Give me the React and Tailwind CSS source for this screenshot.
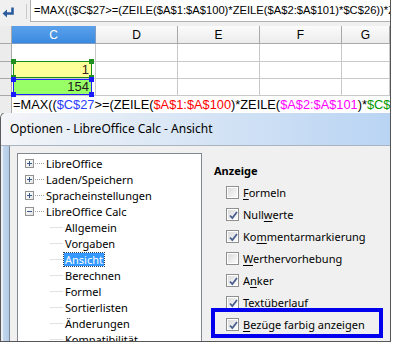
import React from "react";

const SANS = "font-['Liberation_Sans',Arial,sans-serif]";
const UI = "font-['Noto_Sans',sans-serif]";

function EnterIcon() {
  return (
    <svg width="13" height="11" viewBox="0 0 13 11">
      <path d="M10.5 0.5 V6.5 H4" fill="none" stroke="#2b5d9e" strokeWidth="2.6" />
      <path d="M0.5 6.5 L5 2.5 V10.5 Z" fill="#2b5d9e" />
    </svg>
  );
}

function Handle({ cls, color }) {
  return <div className={`absolute w-[5px] h-[5px] ${color} ${cls}`} />;
}

function Check({ checked }) {
  return (
    <div className="w-[13px] h-[13px] border border-[#8e8f8f] bg-white p-px shrink-0">
      <div className="w-full h-full bg-gradient-to-br from-[#dcdcdc] to-[#fafafa] relative">
        {checked && (
          <svg className="absolute left-0 top-0" width="11" height="11" viewBox="0 0 11 11">
            <path d="M2 5.5 L4.3 8 L9 2" fill="none" stroke="#4a5f8f" strokeWidth="1.8" />
          </svg>
        )}
      </div>
    </div>
  );
}

function Opt({ checked, children }) {
  return (
    <div className="h-[22px] flex items-center gap-[4px]">
      <Check checked={checked} />
      <span className="leading-none">{children}</span>
    </div>
  );
}

function U({ children }) {
  return <span className="underline underline-offset-2">{children}</span>;
}

function TreeTop({ label, open }) {
  return (
    <div className="h-[16px] flex items-center">
      <div className="w-[7px]" />
      <div className="w-[9px] h-[9px] border border-[#919191] bg-gradient-to-br from-white to-[#e4e4e4] relative shrink-0">
        <div className="absolute left-[1px] right-[1px] top-[3px] h-px bg-[#3b5a8a]" />
        {!open && <div className="absolute top-[1px] bottom-[1px] left-[3px] w-px bg-[#3b5a8a]" />}
      </div>
      <div className="w-[9px] h-px border-t border-dotted border-[#a0a0a0] ml-px mr-[2px]" />
      <span className="leading-none">{label}</span>
    </div>
  );
}

function TreeChild({ label, sel }) {
  return (
    <div className="h-[16px] flex items-center">
      <div className="w-[32px]" />
      <div className="w-[13px] h-px bg-[#e2e2e2]" />
      <div className="w-[1px]" />
      <span
        className={
          sel
            ? "leading-none bg-[#3399ff] text-white px-px py-[1px] outline outline-1 outline-dotted outline-[#1d3b66]"
            : "leading-none px-px"
        }
      >
        {label}
      </span>
    </div>
  );
}

export default function App() {
  const cols = [
    { l: "C", w: "w-[84px]", sel: true },
    { l: "D", w: "w-[82px]" },
    { l: "E", w: "w-[82px]" },
    { l: "F", w: "w-[82px]" },
    { l: "G", w: "flex-1" },
  ];
  return (
    <div className="w-[393px] h-[345px] bg-white overflow-hidden relative">
      <div className="w-[391px] h-[342px] border-r border-b border-[#555] overflow-hidden relative">
        {/* Spreadsheet */}
        <div className={`h-[112px] ${SANS}`}>
          {/* formula bar */}
          <div className="h-[26px] bg-[#f0f0f0] flex">
            <div className="w-[26px] pl-[2px] pt-[7px]">
              <EnterIcon />
            </div>
            <div className="w-px h-[15px] mt-[4px] bg-[#c9c9c9]" />
            <div className="ml-[3px] flex-1 h-[22px] bg-white border border-t-0 border-r-0 border-[#b0b0b0] flex items-center pl-[3px] text-[11.2px] text-black whitespace-nowrap overflow-hidden">
              =MAX(($C$27&gt;=(ZEILE($A$1:$A$100)*ZEILE($A$2:$A$101)*$C$26))*Z
            </div>
          </div>
          {/* header row */}
          <div className="h-[18px] flex text-[12px]">
            <div className="w-[12px] bg-[#ececec] border-r border-b border-[#a9a9a9]" />
            {cols.map((c) => (
              <div
                key={c.l}
                className={`${c.w} h-full flex items-center justify-center border-r border-b ${
                  c.sel
                    ? "bg-gradient-to-b from-[#5aa1ea] to-[#3b8ae0] text-white border-[#7a9cc4]"
                    : "bg-gradient-to-b from-[#fbfbfb] to-[#ececec] text-black border-[#a9a9a9]"
                }`}
              >
                {c.l}
              </div>
            ))}
          </div>
          {/* rows */}
          {[18, 17, 17].map((h, i) => (
            <div key={i} className="flex" style={{ height: h }}>
              <div className="w-[12px] bg-[#ececec] border-r border-b border-[#a9a9a9]" />
              {cols.map((c) => (
                <div key={c.l} className={`${c.w} h-full border-r border-b border-[#c9c9c9] relative`}>
                  {c.l === "C" && i === 1 && (
                    <div className="absolute left-[1px] top-[-1px] w-[79px] h-[17px] bg-[#ffff99] border border-[#1a8a1a] flex items-center justify-end pr-[2px] text-[13px] text-[#3a2020]">
                      1
                      <Handle cls="left-[-3px] top-[-3px]" color="bg-[#1f8f1f]" />
                      <Handle cls="right-[-3px] top-[-3px]" color="bg-[#1f8f1f]" />
                      <Handle cls="left-[-3px] bottom-[-3px]" color="bg-[#1f8f1f]" />
                      <Handle cls="right-[-3px] bottom-[-3px]" color="bg-[#1f8f1f]" />
                    </div>
                  )}
                  {c.l === "C" && i === 2 && (
                    <div className="absolute left-[1px] top-0 w-[79px] h-[16px] bg-[#99ff66] border border-[#2020ff] flex items-center justify-end pr-[2px] text-[13px] text-[#202020]">
                      154
                      <Handle cls="left-[-3px] top-[-3px]" color="bg-[#1a1aff]" />
                      <Handle cls="right-[-3px] top-[-3px]" color="bg-[#1a1aff]" />
                      <Handle cls="left-[-3px] bottom-[-3px]" color="bg-[#1a1aff]" />
                      <Handle cls="right-[-3px] bottom-[-3px]" color="bg-[#1a1aff]" />
                    </div>
                  )}
                </div>
              ))}
            </div>
          ))}
          {/* in-cell formula line */}
          <div className="h-[17px] flex">
            <div className="w-[12px] bg-[#ececec] border-r border-[#a9a9a9]" />
            <div className="flex-1 bg-white flex items-center pl-px text-[12.8px] whitespace-nowrap overflow-hidden">
              <span className="text-black">=MAX((</span>
              <span className="text-[#2a3cff]">$C$27</span>
              <span className="text-black">&gt;=(ZEILE(</span>
              <span className="text-[#ff0000]">$A$1:$A$100</span>
              <span className="text-black">)*ZEILE(</span>
              <span className="text-[#ff00ff]">$A$2:$A$101</span>
              <span className="text-black">)*</span>
              <span className="text-[#009900]">$C$26</span>
            </div>
          </div>
        </div>

        {/* Dialog */}
        <div className={`h-[231px] border-l border-t border-[#5b5b5b] rounded-tl-[6px] overflow-hidden flex flex-col ${UI}`}>
          <div className="h-[33px] shrink-0 bg-gradient-to-r from-[#f3f5f8] via-[#d7e5f5] to-[#b9d4f3] flex items-center pl-[9px] text-[12px] text-black border-b border-[#a9b4c0]">
            Optionen - LibreOffice Calc - Ansicht
          </div>
          <div className="flex-1 flex">
            <div className="w-[2px] bg-[#e8eef4]" />
            <div className="w-[6px] bg-gradient-to-r from-[#c3d7ee] to-[#b3cbe8]" />
            <div className="w-px bg-[#7d8895]" />
            <div className="flex-1 bg-[#f0f0f0] flex pl-[7px] pt-[7px] text-[11px] text-black">
              <div className="w-[185px] bg-white border border-[#828790] border-b-0 pt-px">
                <TreeTop label="LibreOffice" />
                <TreeTop label="Laden/Speichern" />
                <TreeTop label="Spracheinstellungen" />
                <TreeTop label="LibreOffice Calc" open />
                <TreeChild label="Allgemein" />
                <TreeChild label="Vorgaben" />
                <TreeChild label="Ansicht" sel />
                <TreeChild label="Berechnen" />
                <TreeChild label="Formel" />
                <TreeChild label="Sortierlisten" />
                <TreeChild label="Änderungen" />
                <TreeChild label="Kompatibilität" />
              </div>
              <div className="flex-1 pl-[12px]">
                <div className="h-[16px] mt-[9px] flex items-center font-bold leading-none">Anzeige</div>
                <div className="pl-[12px] mt-[3px]">
                  <Opt><U>F</U>ormeln</Opt>
                  <Opt checked>Null<U>w</U>erte</Opt>
                  <Opt checked>Ko<U>m</U>mentarmarkierung</Opt>
                  <Opt><U>W</U>erthervorhebung</Opt>
                  <Opt checked>A<U>n</U>ker</Opt>
                  <Opt checked>Te<U>x</U>tüberlauf</Opt>
                  <Opt checked><U>B</U>ezüge farbig anzeigen</Opt>
                </div>
              </div>
            </div>
          </div>
        </div>

        {/* annotation box */}
        <div className="absolute left-[211px] top-[308px] w-[172px] h-[30px] border-[4px] border-[#0000ee]" />
      </div>
    </div>
  );
}
